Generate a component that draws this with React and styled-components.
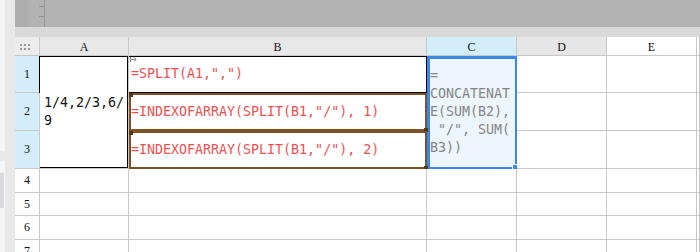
import styled, { createGlobalStyle } from 'styled-components';

const GlobalStyle = createGlobalStyle`
  html, body {
    margin: 0;
    padding: 0;
    background: #fff;
    overflow: hidden;
  }
  #root {
    width: 700px;
    height: 252px;
  }
`;

const Screen = styled.div`
  display: flex;
  width: 700px;
  height: 252px;
  overflow: hidden;
`;

const SideRail = styled.div`
  width: 5px;
  display: flex;
  flex-direction: column;
  background: #f4f4f6;
`;

const RailPiece = styled.div`
  flex-shrink: 0;
  height: ${(p) => p.$h}px;
  width: ${(p) => p.$w || 5}px;
  background: ${(p) => p.$bg};
`;

const SideEdge = styled.div`
  width: 10px;
  background: #e8e8e8;
`;

const Main = styled.div`
  flex: 1;
  display: flex;
  flex-direction: column;
  min-width: 0;
`;

const TopBar = styled.div`
  flex-shrink: 0;
  height: 27px;
  display: flex;
  background: #b2b2b2;
`;

const TopLeft = styled.div`
  width: 13px;
  background: #adadad;
`;

const Ruler = styled.div`
  box-sizing: border-box;
  width: 17px;
  padding-top: 6px;
  display: flex;
  flex-direction: column;
  align-items: flex-end;
  gap: 9px;
  border-right: 1px solid #979797;
`;

const Tick = styled.div`
  width: 5px;
  height: 1px;
  background: #939393;
`;

const SubBar = styled.div`
  flex-shrink: 0;
  height: 10px;
  background: #d9d9d9;
`;

const Sheet = styled.div`
  flex: 1;
  display: grid;
  grid-template-columns: 25px 89px 298px 90px 90px 90px 1fr;
  grid-template-rows: 19px 37px 38px 38px 24px 23px 24px 24px;
  overflow: hidden;
`;

const Cell = styled.div`
  position: relative;
  box-sizing: border-box;
  min-width: 0;
  display: flex;
  align-items: center;
  border-right: 1px solid #c8c8c8;
  border-bottom: 1px solid #c8c8c8;
  background: ${(p) => p.$bg || '#fff'};
  grid-row: ${(p) => (p.$span ? `span ${p.$span}` : 'auto')};
`;

const HeadCell = styled(Cell)`
  justify-content: center;
  font-family: "Liberation Serif", serif;
  font-size: 12px;
  color: #111;
`;

const ColHead = styled(HeadCell)`
  padding-top: 2px;
`;

const Corner = styled(HeadCell)`
  justify-content: flex-start;
  padding: 1px 0 0 5px;
  background: #ececec;
`;

const Dots = styled.div`
  display: grid;
  grid-template-columns: repeat(3, 2px);
  grid-template-rows: repeat(2, 2px);
  gap: 2px;

  span {
    background: #9a9a9a;
  }
`;

const MergedA = styled(Cell)`
  box-shadow: inset 0 1px 0 #000, inset -1px 0 0 #000, inset 0 -1px 0 #000, -1px 0 0 #000;
`;

const BoxedCell = styled(Cell)`
  border-color: #000;
  box-shadow: inset 0 1px 0 #000;
`;

const CellText = styled.div`
  font-family: "DejaVu Sans Mono", monospace;
  font-size: 13.3px;
  line-height: 18px;
  color: ${(p) => p.$color || '#111'};
  padding: 0 2px 0 ${(p) => p.$pad || 2}px;
  white-space: ${(p) => (p.$pre ? 'pre' : 'pre-wrap')};
  word-break: break-all;
`;

const RefBox = styled.div`
  position: absolute;
  inset: 0 -1px -1px 0;
  box-sizing: border-box;
  border: 2px solid #7d5226;
  pointer-events: none;

  &::before,
  &::after {
    content: '';
    position: absolute;
    width: 4px;
    height: 4px;
    background: #5a3515;
  }
  &::before {
    left: -2px;
    top: -2px;
  }
  &::after {
    right: -3px;
    bottom: -3px;
  }
`;

const SelectBox = styled.div`
  position: absolute;
  inset: 0 -2px -2px 0;
  box-sizing: border-box;
  border: 3px solid #3a86ef;
  pointer-events: none;
`;

const FillHandle = styled.div`
  position: absolute;
  right: -3px;
  bottom: -3px;
  width: 5px;
  height: 5px;
  background: #3a86ef;
  border-left: 1px solid #fff;
  border-top: 1px solid #fff;
`;

const JumpMark = styled.svg`
  position: absolute;
  left: 1px;
  top: 1px;
`;

const columns = [
  { key: 'A', bg: '#e8e8e8' },
  { key: 'B', bg: '#e8e8e8' },
  { key: 'C', bg: '#d3eefa' },
  { key: 'D', bg: '#e6e6e6' },
  { key: 'E', bg: '#fff' },
  { key: '', bg: '#fff' },
];

const RED = '#ee5050';
const GREY = '#858585';

const selectedText = '=\nCONCATENAT\nE(SUM(B2),\n "/", SUM(\nB3))';

const Blank = () => (
  <>
    <Cell />
    <Cell />
    <Cell />
  </>
);

const App = () => {
  return (
    <>
      <GlobalStyle />
      <Screen>
        <SideRail>
          <RailPiece $h={151} $bg="#f4f4f6" />
          <RailPiece $h={10} $bg="#e8e8e8" />
          <RailPiece $h={12} $bg="#f4f4f6" />
          <RailPiece $h={35} $w={4} $bg="#d9dadd" />
        </SideRail>
        <SideEdge />
        <Main>
          <TopBar>
            <TopLeft />
            <Ruler>
              <Tick />
              <Tick />
            </Ruler>
          </TopBar>
          <SubBar />
          <Sheet>
            <Corner>
              <Dots>
                {Array.from({ length: 6 }).map((_, i) => (
                  <span key={i} />
                ))}
              </Dots>
            </Corner>
            {columns.map((c, i) => (
              <ColHead key={i} $bg={c.bg}>
                {c.key}
              </ColHead>
            ))}

            <HeadCell $bg="#d3eefa">1</HeadCell>
            <MergedA $span={3}>
              <CellText $pad={4}>1/4,2/3,6/9</CellText>
            </MergedA>
            <BoxedCell>
              <JumpMark width="7" height="5" viewBox="0 0 7 5">
                <path d="M0.5 0V5M0.5 2.5H6M4 0.5L6 2.5L4 4.5" stroke="#8a8a8a" fill="none" strokeWidth="1" />
              </JumpMark>
              <CellText $color={RED}>=SPLIT(A1,",")</CellText>
            </BoxedCell>
            <Cell $span={3} $bg="#edf5fd">
              <CellText $color={GREY} $pad={3} $pre>
                {selectedText}
              </CellText>
              <SelectBox>
                <FillHandle />
              </SelectBox>
            </Cell>
            <Blank />

            <HeadCell $bg="#d3eefa">2</HeadCell>
            <Cell>
              <CellText $color={RED}>=INDEXOFARRAY(SPLIT(B1,"/"), 1)</CellText>
              <RefBox />
            </Cell>
            <Blank />

            <HeadCell $bg="#d3eefa">3</HeadCell>
            <Cell>
              <CellText $color={RED}>=INDEXOFARRAY(SPLIT(B1,"/"), 2)</CellText>
              <RefBox />
            </Cell>
            <Blank />

            {[4, 5, 6, 7].map((n) => (
              <Row key={n} n={n} />
            ))}
          </Sheet>
        </Main>
      </Screen>
    </>
  );
};

const Row = ({ n }) => (
  <>
    <HeadCell>{n}</HeadCell>
    <Cell />
    <Cell />
    <Cell />
    <Cell />
    <Cell />
    <Cell />
  </>
);

export default App;
